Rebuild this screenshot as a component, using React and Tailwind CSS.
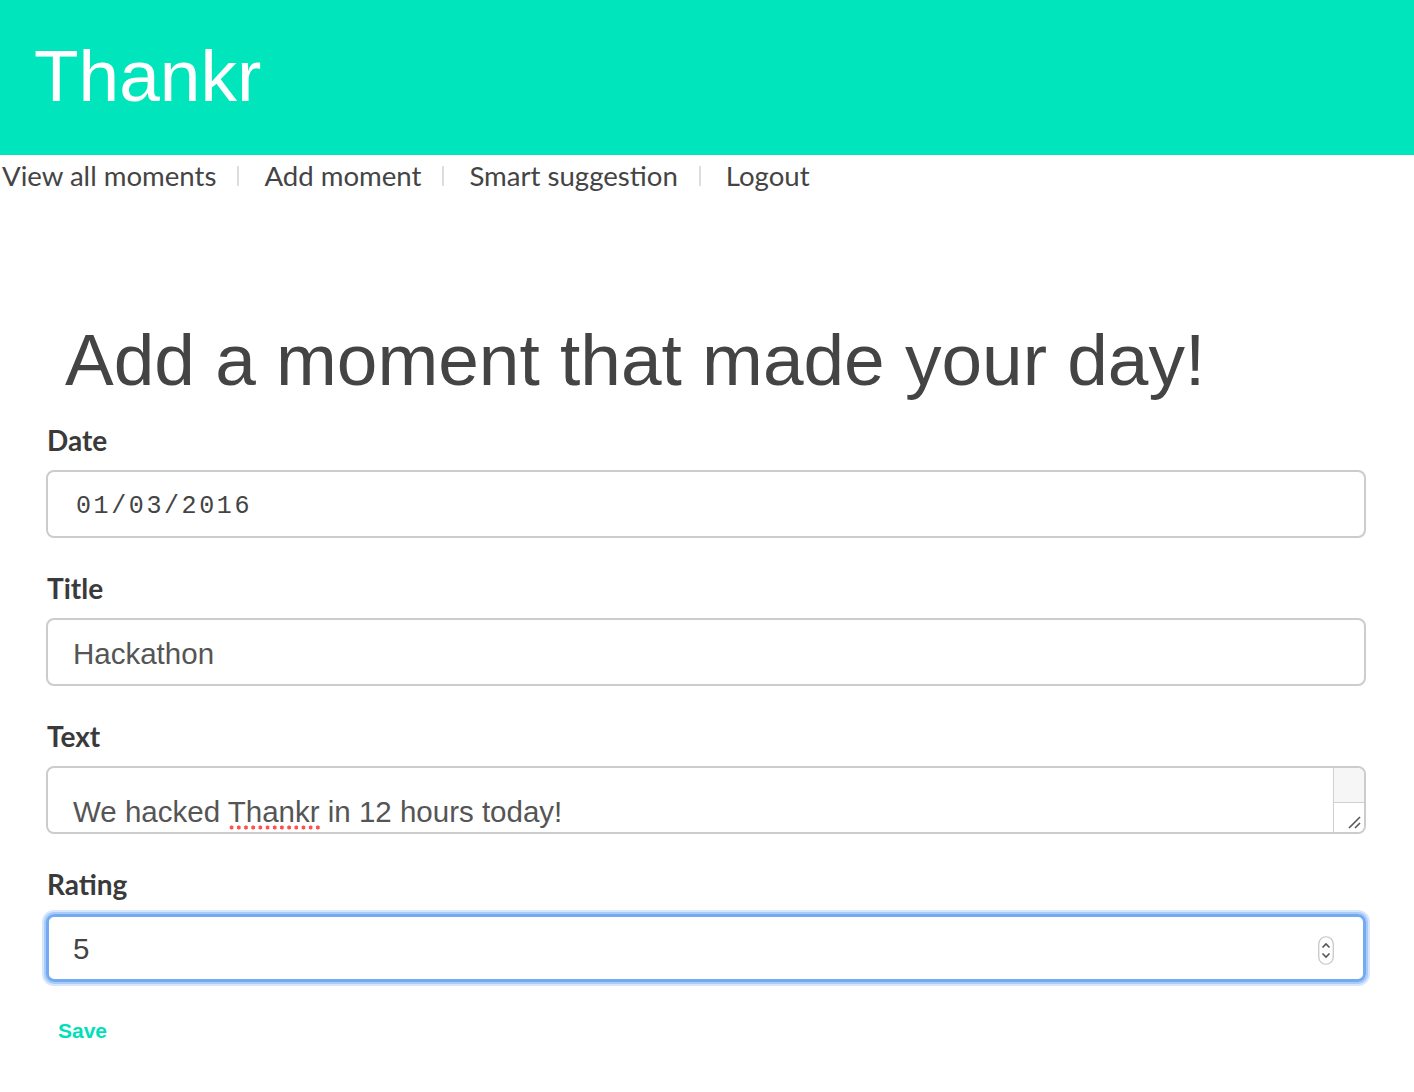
import React from "react";

const lato = { fontFamily: "Lato, 'Open Sans', sans-serif" };

function Sep() {
  return <span className="inline-block w-[2px] h-[20px] bg-[#dddddd] ml-[21px] mr-[25px] self-center" />;
}

function Label({ children }) {
  return (
    <div className="text-[28px] leading-[40px] font-bold text-[#3a3a3a] mb-[10px] pl-[1px]" style={lato}>
      {children}
    </div>
  );
}

export default function App() {
  return (
    <div className="w-[1414px] min-h-[1092px] bg-white" style={{ fontFamily: "'Liberation Sans', Arial, sans-serif" }}>
      <header className="h-[155px] bg-[#00e5bc] pl-[34px] pt-[39px]">
        <div className="text-white text-[73px] leading-[73px]">Thankr</div>
      </header>
      <nav className="flex items-center h-[42px] pl-[2px] text-[27.6px] leading-[40px] text-[#444444]" style={lato}>
        <span>View all moments</span>
        <Sep />
        <span>Add moment</span>
        <Sep />
        <span>Smart suggestion</span>
        <Sep />
        <span>Logout</span>
      </nav>

      <div className="ml-[46px] w-[1320px] pt-[123px]">
        <h1 className="pl-[19px] text-[73px] leading-[80px] text-[#444444] mb-[20px]">Add a moment that made your day!</h1>

        <div className="mb-[30px]">
          <Label>Date</Label>
          <div className="h-[68px] border-2 border-[#cccccc] rounded-[8px] flex items-center pl-[28px] pt-[5px]">
            <span className="text-[25px] tracking-[2.6px] text-[#444444]" style={{ fontFamily: "'Liberation Mono', 'DejaVu Sans Mono', monospace" }}>01/03/2016</span>
          </div>
        </div>

        <div className="mb-[30px]">
          <Label>Title</Label>
          <div className="h-[68px] border-2 border-[#cccccc] rounded-[8px] flex items-center pl-[25px] pt-[4px]">
            <span className="text-[29.5px] text-[#555555]">Hackathon</span>
          </div>
        </div>

        <div className="mb-[30px]">
          <Label>Text</Label>
          <div className="relative h-[68px] border-2 border-[#cccccc] rounded-[8px] overflow-hidden">
            <div className="absolute left-[25px] top-[28px] text-[29.5px] leading-[32px] text-[#555555] whitespace-nowrap">
              We hacked{" "}
              <span className="relative">
                Thankr
                <span
                  className="absolute left-[0px] right-[0px] top-[30px] h-[5px]"
                  style={{ backgroundImage: "radial-gradient(circle, #ff5050 1.9px, transparent 2.2px)", backgroundSize: "7.2px 5px", backgroundRepeat: "repeat-x" }}
                />
              </span>{" "}
              in 12 hours today!
            </div>
            <div className="absolute right-0 top-0 bottom-0 w-[31px] border-l border-[#d0d0d0] flex flex-col">
              <div className="h-[35px] bg-[#f6f6f6] border-b border-[#d0d0d0]" />
              <div className="flex-1 bg-white relative">
                <svg className="absolute right-[2px] bottom-[2px]" width="16" height="16" viewBox="0 0 16 16">
                  <line x1="3" y1="14" x2="14" y2="3" stroke="#555" strokeWidth="1.6" />
                  <line x1="9" y1="14" x2="14" y2="9" stroke="#555" strokeWidth="1.6" />
                </svg>
              </div>
            </div>
          </div>
        </div>

        <div className="mb-[30px]">
          <Label>Rating</Label>
          <div className="relative h-[68px] border-[3px] border-[#74aaf3] rounded-[8px] flex items-center pl-[24px] pt-[2px] shadow-[0_0_0_2px_#a9cbf7,0_0_0_4px_#d6e6fb]">
            <span className="text-[29.5px] text-[#444444]">5</span>
            <svg className="absolute right-[29px] top-[19px]" width="16" height="29" viewBox="0 0 16 29">
              <rect x="0.75" y="0.75" width="14.5" height="27.5" rx="7.25" fill="#fff" stroke="#c4c4c4" strokeWidth="1.2" />
              <polyline points="4.5,11.5 8,8 11.5,11.5" fill="none" stroke="#555" strokeWidth="1.6" />
              <polyline points="4.5,17.5 8,21 11.5,17.5" fill="none" stroke="#555" strokeWidth="1.6" />
            </svg>
          </div>
        </div>

        <div className="pl-[12px] pt-[4px] text-[21px] leading-[30px] font-bold text-[#00e0b8]">Save</div>
      </div>
    </div>
  );
}
